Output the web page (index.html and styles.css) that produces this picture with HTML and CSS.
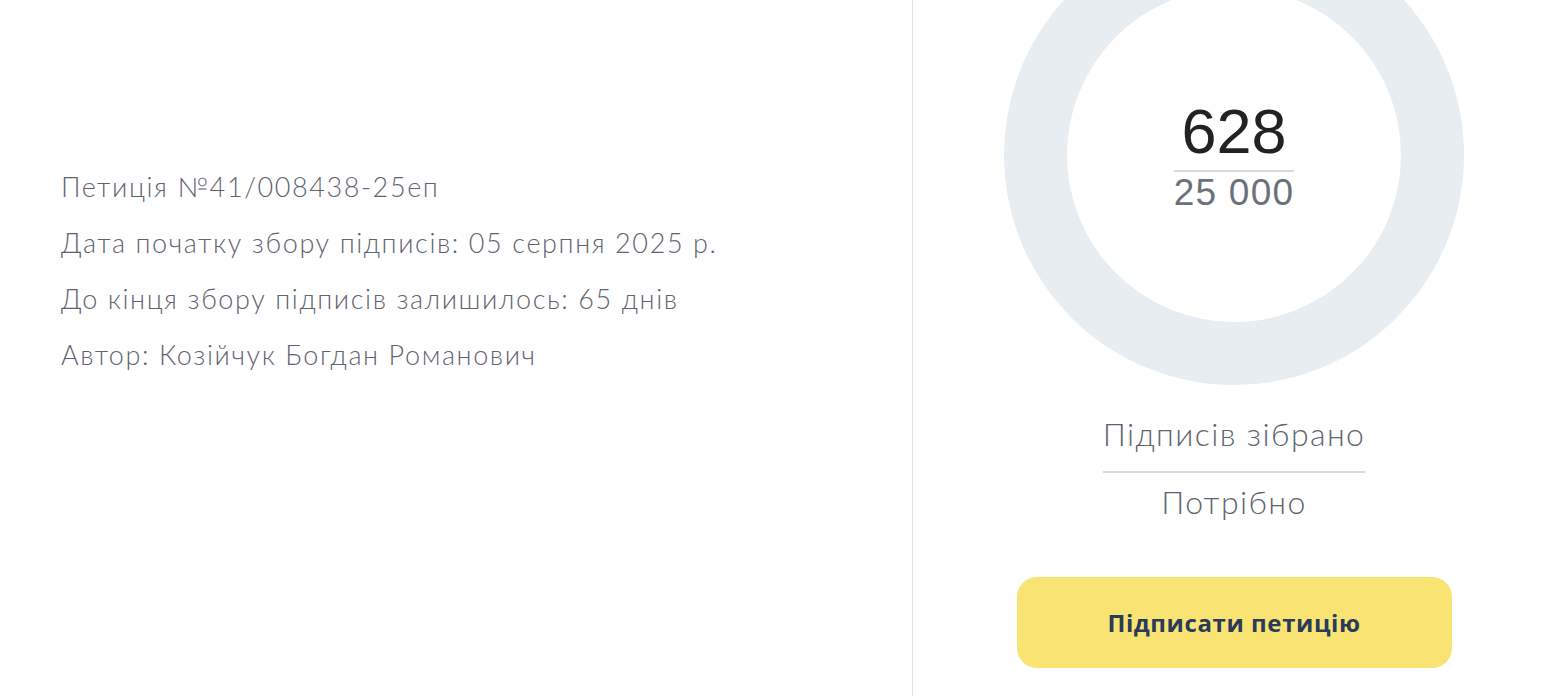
FILE: index.html
```html
<!DOCTYPE html>
<html lang="uk">
<head>
  <meta charset="UTF-8" />
  <meta name="viewport" content="width=device-width, initial-scale=1.0"/>
  <title>Петиція №41/008438-25еп</title>
  <link rel="stylesheet" href="styles.css">
</head>
<body>
  <div class="petition">
    <div class="info">
      <p>Петиція №41/008438-25еп</p>
      <p>Дата початку збору підписів: 05 серпня 2025 р.</p>
      <p>До кінця збору підписів залишилось: 65 днів</p>
      <p>Автор: Козійчук Богдан Романович</p>
    </div>

    <div class="side">
      <div class="ring">
        <div class="count">
          <span class="got">628</span>
          <span class="need">25 000</span>
        </div>
      </div>

      <div class="legend">
        <span class="legend-got">Підписів зібрано</span>
        <span class="legend-need">Потрібно</span>
      </div>

      <button class="sign">Підписати петицію</button>
    </div>
  </div>
</body>
</html>
```

FILE: styles.css
```css
* {
  box-sizing: border-box;
}

body {
  margin: 0;
  padding: 0;
  background: #fff;
  font-family: 'Lato', 'Noto Sans', sans-serif;
  overflow: hidden;
}

.petition {
  display: flex;
  height: 696px;
}

.info {
  flex: 0 0 912px;
  padding: 159px 0 0 61px;
}

.info p {
  margin: 0;
  font-size: 27px;
  line-height: 56px;
  font-weight: 300;
  letter-spacing: 1.6px;
  color: #5f6570;
}

.side {
  flex: 0 0 643px;
  border-left: 1px solid #e2e6e2;
  display: flex;
  flex-direction: column;
  align-items: center;
}

.ring {
  width: 460px;
  height: 460px;
  margin-top: -75px;
  border: 63px solid #e8edf2;
  border-radius: 50%;
  display: flex;
  align-items: center;
  justify-content: center;
}

.count {
  display: flex;
  flex-direction: column;
  align-items: center;
  font-family: 'Liberation Sans', Arial, sans-serif;
}

.got {
  font-size: 63px;
  line-height: 63px;
  color: #222;
  padding-bottom: 7px;
  border-bottom: 2px solid #d6d8da;
  width: 120px;
  text-align: center;
}

.need {
  font-size: 37px;
  line-height: 37px;
  letter-spacing: 1.2px;
  color: #6b717b;
  margin-top: 2px;
}

.legend {
  display: flex;
  flex-direction: column;
  align-items: center;
  margin-top: 29px;
  font-size: 32px;
  line-height: 40px;
  font-weight: 300;
  letter-spacing: 1.4px;
  color: #5f6570;
}

.legend-got {
  padding: 0 0 17px;
  border-bottom: 2px solid #d8d9db;
}

.legend-need {
  margin-top: 9px;
}

.sign {
  margin-top: 55px;
  width: 435px;
  height: 91px;
  border: none;
  border-radius: 20px;
  background: #f9e372;
  color: #2a3a5a;
  font-family: 'Open Sans', 'Noto Sans', sans-serif;
  font-size: 24px;
  font-weight: 700;
  letter-spacing: 0.6px;
  cursor: pointer;
}
```
